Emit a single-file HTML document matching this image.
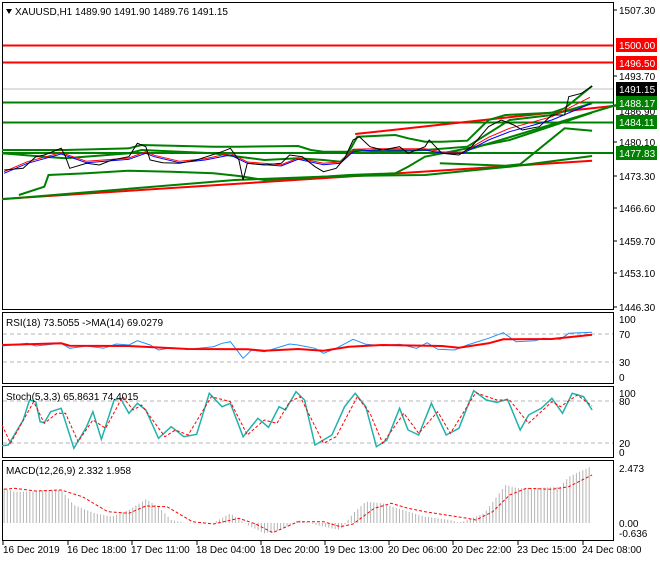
<!DOCTYPE html>
<html><head><meta charset="utf-8"><style>
body{margin:0;background:#fff;width:660px;height:560px;overflow:hidden;font-family:"Liberation Sans",sans-serif}
svg text{font-family:"Liberation Sans",sans-serif;font-size:10px}
</style></head><body>
<svg id="s" width="660" height="560" xmlns="http://www.w3.org/2000/svg">
<rect width="660" height="560" fill="#fff"/>
<g fill="none" stroke="#000" stroke-width="1">
<rect x="2.5" y="2.5" width="611" height="307"/>
<rect x="2.5" y="312.5" width="611" height="71"/>
<rect x="2.5" y="386.5" width="611" height="71"/>
<rect x="2.5" y="460.5" width="611" height="80"/>
</g>
<line x1="3" y1="89" x2="613" y2="89" stroke="#c0c0c0"/>
<line x1="3" y1="45.5" x2="613" y2="45.5" stroke="#f00" stroke-width="2"/>
<line x1="3" y1="62.5" x2="613" y2="62.5" stroke="#f00" stroke-width="2"/>
<line x1="3" y1="102.5" x2="613" y2="102.5" stroke="#008000" stroke-width="2"/>
<line x1="3" y1="122.5" x2="613" y2="122.5" stroke="#008000" stroke-width="2"/>
<line x1="3" y1="153" x2="613" y2="153" stroke="#008000" stroke-width="2"/>
<g stroke="#b4b4b4" stroke-dasharray="4,3"><line x1="3" y1="334" x2="613" y2="334"/><line x1="3" y1="362" x2="613" y2="362"/><line x1="3" y1="401" x2="613" y2="401"/><line x1="3" y1="443" x2="613" y2="443"/></g>
<g id="h" stroke="#b4b4b4"></g>
<g id="lines"></g>
<g fill="#000">
<text x="619" y="14">1507.30</text>
<text x="619" y="80">1493.70</text>
<text x="619" y="115">1486.90</text>
<text x="619" y="146">1480.10</text>
<text x="619" y="180">1473.30</text>
<text x="619" y="212">1466.60</text>
<text x="619" y="245">1459.70</text>
<text x="619" y="277">1453.10</text>
<text x="619" y="311">1446.30</text>
<text x="619" y="323">100</text><text x="619" y="338">70</text><text x="619" y="366">30</text><text x="619" y="381">0</text>
<text x="619" y="397">100</text><text x="619" y="405">80</text><text x="619" y="447">20</text><text x="619" y="456">0</text>
<text x="619" y="472">2.473</text><text x="619" y="527">0.00</text><text x="619" y="537">-0.636</text>
</g>
<rect x="616" y="38" width="41" height="14" fill="#f00"/><text x="619" y="49" fill="#fff">1500.00</text>
<rect x="616" y="56" width="41" height="14" fill="#f00"/><text x="619" y="67" fill="#fff">1496.50</text>
<rect x="616" y="82" width="41" height="14" fill="#000"/><text x="619" y="93" fill="#fff">1491.15</text>
<rect x="616" y="96" width="41" height="14" fill="#008000"/><text x="619" y="107" fill="#fff">1488.17</text>
<rect x="616" y="115" width="41" height="14" fill="#008000"/><text x="619" y="126" fill="#fff">1484.11</text>
<rect x="616" y="146" width="41" height="14" fill="#008000"/><text x="619" y="157" fill="#fff">1477.83</text>
<g stroke="#000"><line x1="613" y1="10" x2="617" y2="10"/><line x1="613" y1="76" x2="617" y2="76"/><line x1="613" y1="142" x2="617" y2="142"/><line x1="613" y1="176" x2="617" y2="176"/><line x1="613" y1="208" x2="617" y2="208"/><line x1="613" y1="241" x2="617" y2="241"/><line x1="613" y1="273" x2="617" y2="273"/><line x1="613" y1="307" x2="617" y2="307"/></g>
<path d="M6,9 L12,9 L9,14 Z" fill="#000"/>
<text x="15" y="15" fill="#000">XAUUSD,H1  1489.90 1491.90 1489.76 1491.15</text>
<text x="6" y="326" fill="#000">RSI(18) 73.5055  -&gt;MA(14) 69.0279</text>
<text x="6" y="400" fill="#000">Stoch(5,3,3) 65.8631 74.4015</text>
<text x="6" y="474" fill="#000">MACD(12,26,9) 2.332 1.958</text>
<g stroke="#000"><line x1="3" y1="541" x2="3" y2="545"/><line x1="68" y1="541" x2="68" y2="545"/><line x1="132" y1="541" x2="132" y2="545"/><line x1="197" y1="541" x2="197" y2="545"/><line x1="261" y1="541" x2="261" y2="545"/><line x1="325" y1="541" x2="325" y2="545"/><line x1="389" y1="541" x2="389" y2="545"/><line x1="453" y1="541" x2="453" y2="545"/><line x1="518" y1="541" x2="518" y2="545"/><line x1="583" y1="541" x2="583" y2="545"/></g>
<g fill="#000" style="font-size:9.5px">
<text x="3" y="553">16 Dec 2019</text><text x="67" y="553">16 Dec 18:00</text><text x="131" y="553">17 Dec 11:00</text><text x="196" y="553">18 Dec 04:00</text><text x="260" y="553">18 Dec 20:00</text><text x="324" y="553">19 Dec 13:00</text><text x="388" y="553">20 Dec 06:00</text><text x="452" y="553">20 Dec 22:00</text><text x="517" y="553">23 Dec 15:00</text><text x="582" y="553">24 Dec 08:00</text>
</g>
</svg>
<script>
var K=2.364;
function P(a,yo){var o=[];for(var i=0;i<a.length;i+=2){o.push((a[i]/K+2).toFixed(1)+','+(yo+a[i+1]/3).toFixed(1));}return o.join(' ');}
var L=[
// main [pts,color,width,dash,yoff]
[[0,597,1395,482],'#f00',2,'',0],
[[835,402,1460,316],'#f00',2,'',0],
[[0,450,150,450,300,445,330,435,500,440,560,440,700,438,730,450,760,455,820,455,840,410,930,405,960,415,1000,425,1040,425,1100,422,1150,360,1190,345,1300,338,1330,325,1395,258],'#008000',2,'',0],
[[40,585,100,560,110,525,200,520,300,512,400,515,500,520,560,528,620,540,700,535,760,530,820,525,930,520,960,500,1000,470,1200,420,1395,338],'#008000',2,'',0],
[[1035,490,1190,497,1225,493,1330,385,1395,392],'#008000',2,'',0],
[[0,460,100,470,150,475,300,460,330,450,500,460,560,470,620,480,700,475,760,480,800,485,830,450,900,455,1000,450,1100,440,1200,360,1300,345,1395,310],'#008000',2,'',0],
[[0,598,550,540,800,528,1000,525,1200,500,1395,468],'#008000',2,'',0],
[[1100,450,1460,312],'#008000',2,'',0],
[[5,520,60,490,140,462,200,488,300,478,340,460,360,470,420,488,480,480,540,465,580,490,660,498,700,478,760,494,800,490,830,455,880,450,1000,450,1040,460,1090,460,1150,420,1200,395,1300,360,1390,312],'#00f',1,'',0],
[[5,515,60,485,140,458,200,484,300,474,340,455,360,466,420,484,480,476,540,460,580,486,660,494,700,474,760,490,800,486,830,448,880,446,1000,446,1040,456,1090,456,1150,412,1200,385,1300,350,1390,292],'#f00',1,'',0],
[[5,510,50,505,80,470,100,465,140,445,150,470,160,505,200,490,230,495,260,480,300,470,320,430,340,440,350,480,380,488,420,490,460,480,520,455,540,445,560,480,570,540,580,490,620,495,660,490,680,465,710,470,740,500,760,515,790,505,810,475,830,420,845,410,870,440,900,450,940,440,960,460,1000,440,1010,420,1040,460,1080,465,1110,440,1150,380,1180,360,1210,375,1230,390,1270,380,1300,345,1330,345,1340,290,1370,280,1395,258],'#000',1,'',0],
// RSI
[[0,138,60,130,80,138,140,130,160,145,200,138,240,145,270,132,300,135,320,122,350,135,370,150,400,143,440,148,500,140,520,130,540,125,570,175,590,150,620,155,680,132,700,135,740,145,760,160,790,145,830,118,860,133,900,137,940,133,980,145,1005,128,1030,148,1070,150,1100,135,1150,115,1185,98,1215,125,1260,122,1280,115,1320,118,1340,100,1395,97],'#1e90ff',1,'',300],
[[0,135,140,130,160,137,300,138,440,147,580,148,620,152,700,147,760,152,820,140,900,135,1040,138,1080,143,1150,130,1185,118,1300,117,1395,104],'#f00',2,'',300],
// Stoch
[[0,437,15,435,50,360,65,300,80,305,90,365,100,368,115,335,140,325,170,445,200,380,215,335,235,418,265,300,280,295,300,340,320,310,340,330,370,415,400,380,430,410,460,403,490,280,520,320,540,310,570,410,605,355,630,382,655,320,670,330,695,275,715,300,740,435,780,405,810,320,835,280,860,320,885,440,910,420,940,325,960,390,985,405,1015,310,1050,405,1080,385,1115,272,1145,300,1170,307,1195,298,1225,390,1245,345,1275,325,1300,295,1325,340,1348,280,1375,290,1395,330],'#20b2aa',1.5,'',300],
[[0,375,20,430,75,305,100,370,130,340,150,340,180,425,215,360,245,385,285,290,310,330,330,315,385,410,410,390,440,405,495,290,540,305,580,405,620,360,650,370,680,305,705,290,760,430,790,410,840,290,870,340,900,430,950,340,985,400,1030,335,1060,400,1120,278,1170,300,1200,300,1245,370,1300,305,1320,320,1360,285,1395,318],'#f00',1,'3,2',300],
// MACD signal
[[5,568,30,565,80,573,140,570,190,590,250,635,300,640,340,618,390,620,450,665,500,672,560,655,600,672,640,698,700,665,760,665,800,680,830,672,880,625,920,610,960,625,1000,635,1100,655,1120,660,1160,635,1200,585,1240,565,1300,568,1340,560,1395,525],'#f00',1,'3,2',300]
];
var h='';
L.forEach(function(l){h+='<polyline fill="none" stroke="'+l[1]+'" stroke-width="'+l[2]+'"'+(l[3]?' stroke-dasharray="'+l[3]+'"':'')+' points="'+P(l[0],l[4])+'"/>';});
document.getElementById('lines').innerHTML=h;
var hp=[5,565,30,575,60,575,100,570,140,570,170,615,220,640,260,650,300,630,340,598,370,620,400,660,440,670,500,668,540,640,580,675,620,700,660,690,700,660,760,680,800,690,830,640,860,605,900,610,960,635,1000,650,1060,660,1080,668,1100,660,1140,640,1190,555,1220,565,1250,565,1320,560,1340,530,1395,498];
function f(x){for(var i=0;i<hp.length-2;i+=2){if(x<=hp[i+2]){return hp[i+1]+(hp[i+3]-hp[i+1])*(x-hp[i])/(hp[i+2]-hp[i]);}}return 498;}
var b='';
for(var zx=5;zx<=1395;zx+=7.6){var x=(zx/K+2).toFixed(1),y=(300+f(zx)/3).toFixed(1);b+='<line x1="'+x+'" x2="'+x+'" y1="523" y2="'+y+'"/>';}
document.getElementById('h').innerHTML=b;
</script>
</body></html>
